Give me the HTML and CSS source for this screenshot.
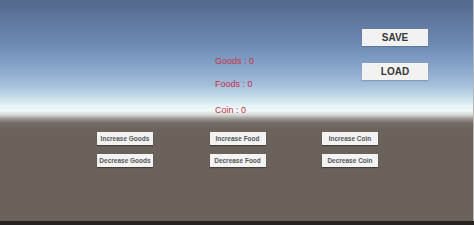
FILE: index.html
```html
<!DOCTYPE html>
<html lang="en">

<head>
  <meta charset="UTF-8">
  <meta name="viewport" content="width=device-width, initial-scale=1.0">
  <title>Save Load Demo</title>
  <link rel="stylesheet" href="styles.css">
</head>

<body>

  <div class="screen">
    <div class="hud">
      <div class="stats">
        <p class="stat stat-goods">Goods : 0</p>
        <p class="stat stat-foods">Foods : 0</p>
        <p class="stat stat-coin">Coin : 0</p>
      </div>
      <div class="menu">
        <button class="menu-btn">SAVE</button>
        <button class="menu-btn">LOAD</button>
      </div>
    </div>

    <div class="controls">
      <button class="ctrl-btn">Increase Goods</button>
      <button class="ctrl-btn">Increase Food</button>
      <button class="ctrl-btn">Increase Coin</button>
      <button class="ctrl-btn">Decrease Goods</button>
      <button class="ctrl-btn">Decrease Food</button>
      <button class="ctrl-btn">Decrease Coin</button>
    </div>
  </div>
  <div class="taskbar"></div>

</body>

</html>
```

FILE: styles.css
```css
body {
  margin: 0;
  width: 474px;
  height: 225px;
  overflow: hidden;
  font-family: "Liberation Sans", Arial, sans-serif;
  background-color: #252220;
}

.screen {
  height: 221px;
  box-sizing: border-box;
  border-right: 1px solid #b9b6b2;
  background: linear-gradient(to bottom,
      #56698f 0px,
      #5d7399 15px,
      #6a86b0 40px,
      #84a2c8 65px,
      #a3bfdb 85px,
      #c6dceb 97px,
      #e6f4f7 106px,
      #f0f8f7 111px,
      #d2d6d3 115px,
      #9a9590 119px,
      #736b65 123px,
      #6b625c 130px,
      #6a615b 221px);
}

.hud {
  display: flex;
  align-items: flex-start;
  height: 116px;
  padding-left: 215px;
  padding-right: 45px;
}

.stats {
  padding-top: 55px;
}

.stat {
  margin: 0;
  font-size: 9px;
  line-height: 12px;
  color: #c72f4b;
}

.stat-foods {
  margin-top: 11px;
}

.stat-coin {
  margin-top: 14px;
}

.menu {
  margin-left: auto;
  padding-top: 29px;
  display: flex;
  flex-direction: column;
  gap: 17px;
}

.menu-btn {
  width: 66px;
  height: 17px;
  padding: 0;
  border: none;
  background-color: #f2f2f2;
  color: #383838;
  font-family: inherit;
  font-size: 10px;
  font-weight: bold;
  box-shadow: 0 1px 1px rgba(0, 0, 0, 0.15);
}

.controls {
  display: grid;
  grid-template-columns: repeat(3, 56px);
  column-gap: 56.5px;
  row-gap: 9px;
  margin-top: 16px;
  padding-left: 97px;
}

.ctrl-btn {
  height: 13px;
  padding: 0;
  border: none;
  background-color: #f3f3f3;
  color: #555;
  font-family: inherit;
  font-size: 6.5px;
  font-weight: bold;
  white-space: nowrap;
  box-shadow: 0 1px 1px rgba(0, 0, 0, 0.35);
}

.taskbar {
  height: 4px;
  background-color: #252220;
}
```
